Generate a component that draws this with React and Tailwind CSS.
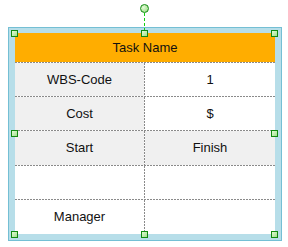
import React from "react";

const hDash = "bg-[repeating-linear-gradient(90deg,#8a8a8a_0_2px,transparent_2px_3px)]";

function Row({ left, right, leftBg, rightBg, h, last, header }) {
  return (
    <div className="flex flex-col">
      {header ? (
        <div className={`flex items-center justify-center bg-[#ffad00] ${h}`}>{left}</div>
      ) : (
        <div className={`flex ${h}`}>
          <div className={`w-[129px] flex items-center justify-center ${leftBg}`}>{left}</div>
          <div className="w-px bg-[repeating-linear-gradient(180deg,#8a8a8a_0_2px,transparent_2px_3px)] bg-white" />
          <div className={`flex-1 flex items-center justify-center ${rightBg}`}>{right}</div>
        </div>
      )}
      {!last && <div className={`h-px ${hDash} bg-white`} />}
    </div>
  );
}

function Handle({ className }) {
  return (
    <div
      className={`absolute w-[7px] h-[7px] border border-[#118a11] bg-[linear-gradient(135deg,#e4fbd9,#9fe08a)] ${className}`}
    />
  );
}

export default function App() {
  return (
    <div
      className="relative w-[288px] h-[247px] bg-white overflow-hidden text-[13px] text-[#111]"
      style={{ fontFamily: '"Liberation Sans", Arial, sans-serif' }}
    >
      <div className="pt-[27px] pl-[8px]">
        <div className="w-[274px] h-[214px] border border-[#74bfd4] bg-[#b7dee9] pt-[5px] pl-[6px]">
          <div className="w-[260px] h-[201px] flex flex-col bg-white">
            <Row header left="Task Name" h="h-[29px]" />
            <Row left="WBS-Code" right="1" leftBg="bg-[#f0f0f0]" rightBg="bg-white" h="h-[33px]" />
            <Row left="Cost" right="$" leftBg="bg-[#f0f0f0]" rightBg="bg-white" h="h-[33px]" />
            <Row left="Start" right="Finish" leftBg="bg-[#f0f0f0]" rightBg="bg-[#f0f0f0]" h="h-[34px]" />
            <Row left="" right="" leftBg="bg-white" rightBg="bg-white" h="h-[33px]" />
            <Row left="Manager" right="" leftBg="bg-white" rightBg="bg-white" h="h-[34px]" last />
          </div>
        </div>
      </div>

      {/* rotation handle */}
      <div className="absolute left-[144px] top-[13px] w-px h-[17px] bg-[repeating-linear-gradient(180deg,#12d012_0_3px,transparent_3px_5px)]" />
      <div className="absolute left-[140px] top-[4px] w-[9px] h-[9px] rounded-full border border-[#118a11] bg-[radial-gradient(circle_at_35%_35%,#e4fbd9,#8fd878)]" />

      {/* selection handles */}
      <Handle className="left-[11px] top-[30px]" />
      <Handle className="left-[141px] top-[30px]" />
      <Handle className="left-[271px] top-[30px]" />
      <Handle className="left-[11px] top-[130px]" />
      <Handle className="left-[271px] top-[130px]" />
      <Handle className="left-[11px] top-[231px]" />
      <Handle className="left-[141px] top-[231px]" />
      <Handle className="left-[271px] top-[231px]" />
    </div>
  );
}
